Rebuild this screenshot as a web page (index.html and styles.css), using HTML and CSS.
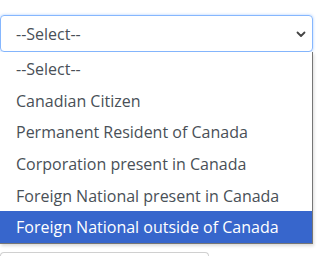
FILE: index.html
```html
<!DOCTYPE html>
<html lang="en">
<head>
  <meta charset="UTF-8">
  <meta name="viewport" content="width=device-width, initial-scale=1.0">
  <title>Status select</title>
  <link rel="stylesheet" href="styles.css">
</head>
<body>

  <div class="form-area">
    <div class="status-field">
      <div class="fake-select">
        <span>--Select--</span>
        <svg class="chevron" width="10" height="7" viewBox="0 0 10 7">
          <path d="M1.5 1.5 L5 5 L8.5 1.5" fill="none" stroke="#444" stroke-width="1.8" stroke-linecap="round" stroke-linejoin="round"/>
        </svg>
      </div>
      <ul class="dropdown-list">
        <li>--Select--</li>
        <li>Canadian Citizen</li>
        <li>Permanent Resident of Canada</li>
        <li>Corporation present in Canada</li>
        <li>Foreign National present in Canada</li>
        <li class="selected">Foreign National outside of Canada</li>
      </ul>
    </div>
    <div class="next-input"></div>
  </div>

</body>
</html>
```
FILE: styles.css
```css
/* Estilos generales */
body {
  margin: 0;
  background: white;
  font-family: "Open Sans", "Noto Sans", Arial, sans-serif;
  height: 258px;
  overflow: hidden;
}

.form-area {
  padding-top: 15px;
  width: 313px;
}

.status-field {
  position: relative;
}

/* Select con foco */
.fake-select {
  height: 37px;
  box-sizing: border-box;
  border: 1px solid #86b7fe;
  border-radius: 4px;
  box-shadow: 0 0 3px rgba(13, 110, 253, 0.35);
  display: flex;
  align-items: center;
  justify-content: space-between;
  padding: 0 6px 0 15px;
  font-size: 16px;
  color: #495057;
}

.chevron {
  margin-top: 1px;
}

/* Lista desplegada */
.dropdown-list {
  list-style: none;
  margin: 0;
  padding: 1px 0 0;
  width: 313px;
  box-sizing: border-box;
  border: 1px solid #767676;
  border-left: none;
  border-top: none;
  background: white;
  box-shadow: 1px 2px 3px rgba(0, 0, 0, 0.15);
}

.dropdown-list li {
  height: 31.7px;
  display: flex;
  align-items: center;
  padding-left: 16px;
  font-size: 16px;
  color: #495057;
}

.dropdown-list li.selected {
  background: #3766cc;
  color: white;
}

/* Siguiente campo */
.next-input {
  margin-top: 8px;
  width: 209px;
  height: 4px;
  box-sizing: border-box;
  border: 1px solid #d0d0d0;
  border-bottom: none;
  border-radius: 4px 4px 0 0;
}
```
